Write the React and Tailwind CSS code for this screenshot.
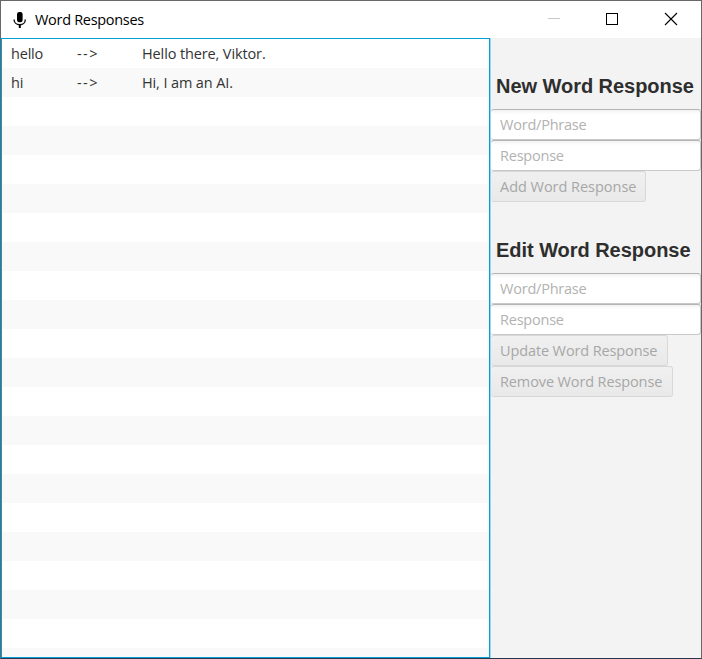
const ROW_COUNT = 22;

const responses = [
  { word: "hello", reply: "Hello there, Viktor." },
  { word: "hi", reply: "Hi, I am an AI." },
];

function MicIcon() {
  return (
    <svg width="13" height="17" viewBox="0 0 13 17" fill="none" className="block">
      <rect x="4" y="0" width="5.6" height="10.2" rx="2.2" fill="#000" />
      <path d="M1.100 7.400C1.100 10.600 3.600 12.700 6.800 12.700s5.500-2.100 5.500-5.300" stroke="#111" strokeWidth="1.400" />
      <path d="M6.800 12.500V16" stroke="#000" strokeWidth="2" />
    </svg>
  );
}

function TitleBar() {
  return (
    <header className="flex h-[37px] shrink-0 items-center bg-white pl-[12px]">
      <div className="pt-px">
        <MicIcon />
      </div>
      <h1 className="ml-[9px] flex-1 whitespace-nowrap text-[14.5px] leading-[20px] tracking-[-0.3px] text-black">
        Word Responses
      </h1>
      <svg width="154" height="37" viewBox="0 0 154 37" fill="none" shapeRendering="crispEdges" className="block">
        <path d="M1 17.500h12" stroke="#c8c8c8" />
        <rect x="59.500" y="12.500" width="11" height="11" stroke="#000" />
        <path d="M118 12l12 12M130 12l-12 12" stroke="#000" strokeWidth="1.100" shapeRendering="auto" />
      </svg>
    </header>
  );
}

function ResponseList() {
  return (
    <div className="h-[620px] w-[489px] shrink-0 overflow-hidden border border-[#039ed3] bg-white">
      {Array.from({ length: ROW_COUNT }, (_, i) => (
        <div
          key={i}
          className="flex h-[29px] items-center whitespace-nowrap pl-[9px] text-[14.5px] leading-[20px] text-[#333] odd:bg-white even:bg-[#f9f9f9]"
        >
          {responses[i] && (
            <>
              <span className="w-[66px] tracking-[-0.2px]">{responses[i].word}</span>
              <span className="w-[65px] tracking-[1.4px]">--&gt;</span>
              <span className="tracking-[-0.12px]">{responses[i].reply}</span>
            </>
          )}
        </div>
      ))}
    </div>
  );
}

function Field({ placeholder }) {
  return (
    <input
      placeholder={placeholder}
      className="block h-[31px] w-full rounded-[3px] border border-l-0 border-[#c8c8c8] border-t-[#b5b5b5] bg-white bg-linear-to-b from-[#f2f2f2] to-white to-15% px-[9px] pb-px text-[14.5px] tracking-[-0.22px] text-[#333] placeholder:text-[#b2b2b2] placeholder:opacity-100"
    />
  );
}

function ActionButton({ children, className }) {
  return (
    <button
      disabled
      className={`block h-[31px] whitespace-nowrap rounded-[3px] border border-l-0 border-[#d8d8d8] bg-linear-to-b from-[#f0f0f0] to-[#e9e9e9] pl-[9px] text-left text-[14.5px] leading-[29px] text-[#a7a7a7] ${className}`}
    >
      {children}
    </button>
  );
}

function Heading({ children, className }) {
  return (
    <h2
      className={`whitespace-nowrap pl-[5px] font-['Liberation_Sans',Arial,sans-serif] text-[20px] font-bold leading-[24px] tracking-[-0.04px] text-[#2e2e2e] ${className}`}
    >
      {children}
    </h2>
  );
}

export default function App() {
  return (
    <main className="flex h-[659px] w-[702px] flex-col overflow-hidden border border-[#696767] border-b-[#29374c] bg-[#f3f3f3] font-['Open_Sans','Segoe_UI',sans-serif]">
      <TitleBar />
      <div className="flex min-h-0 flex-1">
        <ResponseList />
        <aside className="w-[211px] shrink-0 border-l border-[#9fd6ea]">
          <section className="pt-[36px]">
            <Heading className="mb-[11px]">New Word Response</Heading>
            <Field placeholder="Word/Phrase" />
            <Field placeholder="Response" />
            <ActionButton className="w-[155px] tracking-[-0.03px]">Add Word Response</ActionButton>
          </section>
          <section className="pt-[36px]">
            <Heading className="mb-[11px]">Edit Word Response</Heading>
            <Field placeholder="Word/Phrase" />
            <Field placeholder="Response" />
            <ActionButton className="w-[177px] tracking-[-0.12px]">Update Word Response</ActionButton>
            <ActionButton className="w-[182px] tracking-[-0.12px]">Remove Word Response</ActionButton>
          </section>
        </aside>
      </div>
    </main>
  );
}
